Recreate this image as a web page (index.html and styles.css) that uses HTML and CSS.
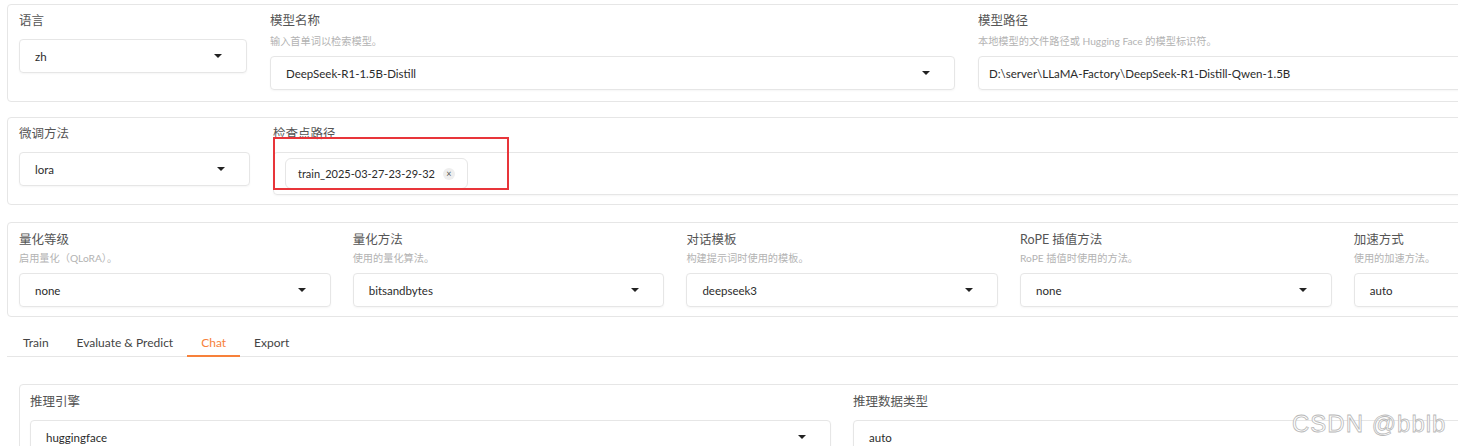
FILE: index.html
```html
<!DOCTYPE html>
<html lang="zh">
<head>
<meta charset="utf-8">
<title>LLaMA-Factory</title>
<link rel="stylesheet" href="styles.css">
</head>
<body>
<div class="page">
  <section class="panel p1">
    <div class="field w-lang">
      <div class="label">语言</div>
      <div class="control dropdown nohint"><span class="val">zh</span><span class="arrow"></span></div>
    </div>
    <div class="field w-name">
      <div class="label">模型名称</div>
      <div class="hint">输入首单词以检索模型。</div>
      <div class="control dropdown"><span class="val">DeepSeek-R1-1.5B-Distill</span><span class="arrow"></span></div>
    </div>
    <div class="field w-path">
      <div class="label">模型路径</div>
      <div class="hint">本地模型的文件路径或 Hugging Face 的模型标识符。</div>
      <div class="control text"><span class="val">D:\server\LLaMA-Factory\DeepSeek-R1-Distill-Qwen-1.5B</span></div>
    </div>
  </section>

  <section class="panel p2">
    <div class="field w-ft">
      <div class="label">微调方法</div>
      <div class="control dropdown nohint"><span class="val">lora</span><span class="arrow"></span></div>
    </div>
    <div class="field w-ckpt">
      <div class="label">检查点路径</div>
      <div class="control multi nohint">
        <span class="chip">train_2025-03-27-23-29-32<span class="chip-x">×</span></span>
      </div>
    </div>
    <div class="annot"></div>
  </section>

  <section class="panel p3">
    <div class="field w-q">
      <div class="label">量化等级</div>
      <div class="hint">启用量化（QLoRA）。</div>
      <div class="control dropdown"><span class="val">none</span><span class="arrow"></span></div>
    </div>
    <div class="field w-q">
      <div class="label">量化方法</div>
      <div class="hint">使用的量化算法。</div>
      <div class="control dropdown"><span class="val">bitsandbytes</span><span class="arrow"></span></div>
    </div>
    <div class="field w-q">
      <div class="label">对话模板</div>
      <div class="hint">构建提示词时使用的模板。</div>
      <div class="control dropdown"><span class="val">deepseek3</span><span class="arrow"></span></div>
    </div>
    <div class="field w-q">
      <div class="label">RoPE 插值方法</div>
      <div class="hint">RoPE 插值时使用的方法。</div>
      <div class="control dropdown"><span class="val">none</span><span class="arrow"></span></div>
    </div>
    <div class="field w-q">
      <div class="label">加速方式</div>
      <div class="hint">使用的加速方法。</div>
      <div class="control dropdown"><span class="val">auto</span><span class="arrow"></span></div>
    </div>
  </section>

  <nav class="tabs">
    <span class="tab">Train</span>
    <span class="tab">Evaluate &amp; Predict</span>
    <span class="tab active">Chat</span>
    <span class="tab">Export</span>
  </nav>

  <section class="panel p4">
    <div class="field w-eng">
      <div class="label">推理引擎</div>
      <div class="control dropdown nohint"><span class="val">huggingface</span><span class="arrow"></span></div>
    </div>
    <div class="field w-dtype">
      <div class="label">推理数据类型</div>
      <div class="control nohint"><span class="val">auto</span></div>
    </div>
  </section>

  <div class="watermark">CSDN @bblb</div>
</div>
</body>
</html>
```

FILE: styles.css
```css
html, body {
  margin: 0;
  padding: 0;
  background: #ffffff;
  overflow: hidden;
}

body {
  width: 1458px;
  height: 446px;
  font-family: Lato, "Noto Sans CJK SC", sans-serif;
  color: #333;
}

.page {
  position: relative;
  padding: 4px 0 0 7px;
  width: 1600px;
  height: 446px;
  box-sizing: border-box;
  overflow: hidden;
}

.panel {
  display: flex;
  border: 1px solid #e6e6e6;
  border-radius: 4px;
  box-sizing: border-box;
  padding: 7px 0 0 11px;
  width: 1500px;
}

.p1 { height: 98px; gap: 23px; }
.p2 { height: 88px; gap: 23px; margin-top: 15px; position: relative; }
.p3 { height: 95px; gap: 22px; margin-top: 17px; padding-top: 8px; }
.p4 { height: 80px; gap: 22px; margin-top: 27px; margin-left: 12px; padding-top: 8px; padding-left: 10px; }

.field {
  display: flex;
  flex-direction: column;
  flex: none;
}

.w-lang { width: 228px; }
.w-name { width: 685px; }
.w-path { width: 600px; }
.w-ft { width: 231px; }
.w-ckpt { width: 1200px; }
.w-q { width: 311.7px; }
.w-eng { width: 801px; }
.w-dtype { width: 620px; }

.label {
  font-size: 12.5px;
  line-height: 18px;
  color: #555;
  margin-bottom: 4px;
}

.hint {
  font-size: 10.2px;
  line-height: 14px;
  color: #b3b3b3;
  margin-bottom: 8px;
}

.p3 .label { margin-bottom: 2px; }
.p3 .hint { margin-bottom: 8px; }

.control {
  height: 34px;
  border: 1px solid #e6e6e6;
  border-radius: 4px;
  box-sizing: border-box;
  display: flex;
  align-items: center;
  padding: 0 24px 0 15px;
  box-shadow: 0 1px 2px rgba(0,0,0,0.04);
}

.control.text { padding-left: 10px; }

.control.nohint { margin-top: 5px; }

.val {
  font-size: 11.5px;
  color: #2b2b2b;
  flex: 1;
  white-space: nowrap;
}

.arrow {
  width: 0;
  height: 0;
  border-left: 4px solid transparent;
  border-right: 4px solid transparent;
  border-top: 4.5px solid #222;
}

.multi {
  height: 43px;
  padding: 0 11px;
}

.chip {
  display: inline-flex;
  align-items: center;
  height: 31px;
  box-sizing: border-box;
  padding: 0 12px;
  border: 1px solid #e6e6e6;
  border-radius: 6px;
  font-size: 11px;
  color: #2b2b2b;
  gap: 8px;
  white-space: nowrap;
}

.chip-x {
  width: 12px;
  height: 12px;
  border-radius: 50%;
  background: #eeeeee;
  color: #555;
  font-size: 9px;
  line-height: 12px;
  text-align: center;
}

.annot {
  position: absolute;
  left: 265px;
  top: 19px;
  width: 236px;
  height: 53px;
  border: 2px solid #e8353a;
  box-sizing: border-box;
}

.tabs {
  display: flex;
  margin-top: 8px;
  width: 1500px;
  border-bottom: 1px solid #e6e6e6;
  padding-left: 2px;
}

.tab {
  font-size: 12px;
  line-height: 18px;
  padding: 9px 14px 3px;
  color: #444;
  margin-bottom: -1px;
  border-bottom: 2px solid transparent;
}

.tab.active {
  color: #f7813a;
  border-bottom-color: #f7813a;
}

.watermark {
  position: absolute;
  left: 1292px;
  top: 410px;
  font-family: "Liberation Sans", sans-serif;
  font-size: 24px;
  letter-spacing: 1px;
  color: #ffffff;
  -webkit-text-stroke: 0.8px #b8b8b8;
}
```
